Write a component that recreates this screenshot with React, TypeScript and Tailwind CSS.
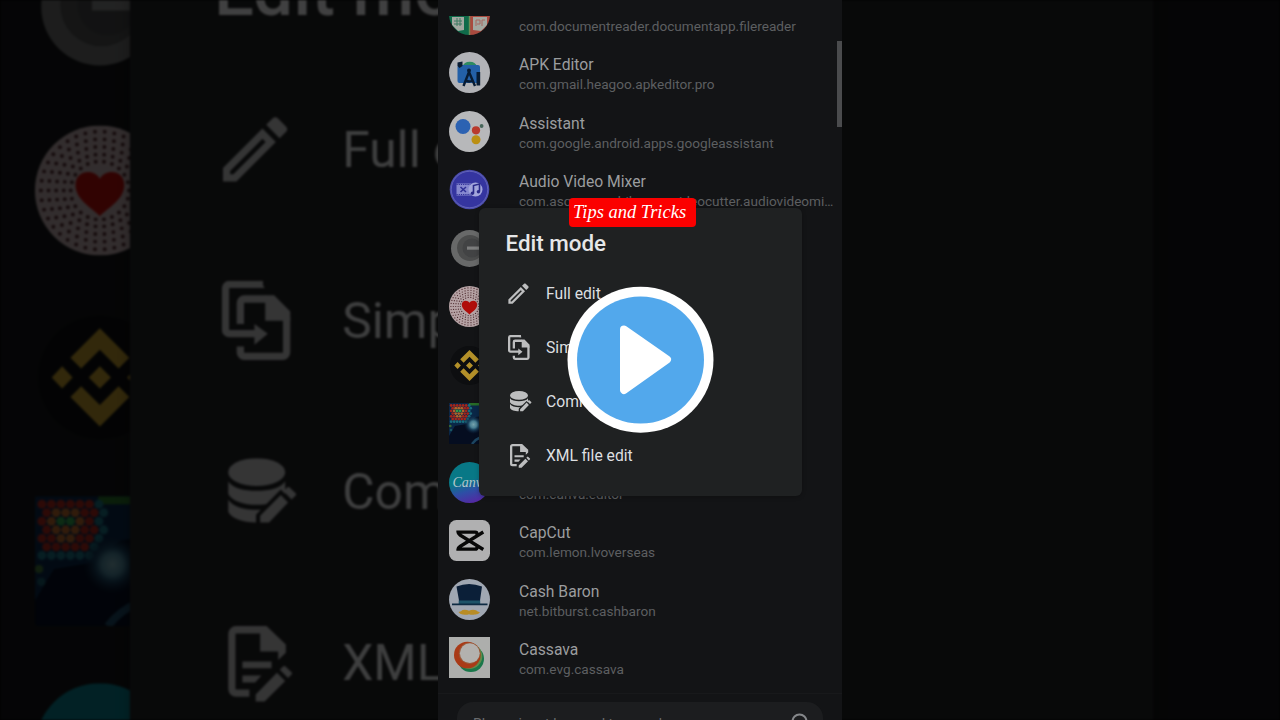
import React from "react";

type App = { name?: string; pkg?: string; icon: React.ReactNode };

const Svg = ({ children }: { children: React.ReactNode }) => (
  <svg className="block h-[41px] w-[41px] shrink-0" viewBox="0 0 41 41">
    {children}
  </svg>
);

const ring = (radius: number, count: number) =>
  Array.from({ length: count }, (_, i) => {
    const a = (i / count) * Math.PI * 2;
    return (
      <circle
        key={`${radius}-${i}`}
        cx={20.5 + Math.cos(a) * radius}
        cy={20.5 + Math.sin(a) * radius}
        r={0.62}
        fill="#4d2a2e"
      />
    );
  });

const bubbles = Array.from({ length: 56 }, (_, i) => {
  const row = Math.floor(i / 8);
  const col = i % 8;
  const x = 2.2 + col * 3 + (row % 2) * 1.5;
  const y = 2.5 + row * 2.7;
  const d = Math.hypot(x - 9.5, y - 8.5);
  if (d > 13) return null;
  const fill = d < 2 ? "#2f9a4a" : d < 5.5 ? "#b0632a" : d < 10 ? "#a3261b" : "#1a6c7c";
  return <circle key={i} cx={x} cy={y} r={1.4} fill={fill} />;
});

const DocsIcon = (
  <Svg>
    <clipPath id="docs">
      <circle cx="20.5" cy="20.5" r="20.5" />
    </clipPath>
    <g clipPath="url(#docs)">
      <path fill="#0f6b4a" d="M0 0h20.5v41H0z" />
      <path fill="#a94a3f" d="M20.5 0H41v41H20.5z" />
      <path fill="#a3a8a1" d="M3 23h12v13l-6 1-6-6zM24 23h14v8l-6 6-8-1z" />
      <path stroke="#3c7a62" strokeWidth="1" d="M5 27h8M5 30h8M8 24v8M11 24v8" />
      <path stroke="#a8665e" fill="none" strokeWidth="1" d="M27 32v-6h4v4h-3M33 32v-6h3" />
      <path stroke="#6d8d57" strokeWidth="1.4" d="M20.5 20v21" />
    </g>
  </Svg>
);

const ApkIcon = (
  <Svg>
    <circle cx="20.5" cy="20.5" r="20.5" fill="#b2b3b7" />
    <path fill="#2d8b62" d="M13.500 14.500a7.500 6.500 0 0 1 14.500 0z" />
    <rect x="8.500" y="13" width="22.500" height="18" rx="2" fill="#2360a8" />
    <path fill="#0a1c33" d="M8.500 10.500l5-1v4.500l-3 2-2-2z" />
    <path fill="none" stroke="#071b33" strokeWidth="2.400" d="M14.500 34l5.500-14 6 14M17 28.500q3 2 7 0" />
    <circle cx="20" cy="18.500" r="2" fill="#071b33" />
    <path fill="#071b33" d="M27.500 20h3.700v13.500h-3.700z" />
  </Svg>
);

const AssistantIcon = (
  <Svg>
    <circle cx="20.5" cy="20.5" r="20.5" fill="#b7b8ba" />
    <circle cx="14" cy="15.5" r="7.500" fill="#2c62b2" />
    <circle cx="27" cy="19.300" r="4.100" fill="#b93a2d" />
    <circle cx="27" cy="28.800" r="4.500" fill="#bb8f12" />
    <circle cx="32.600" cy="15" r="1.900" fill="#47665a" />
  </Svg>
);

const MixerIcon = (
  <Svg>
    <circle cx="20.5" cy="20.5" r="19.800" fill="#4a4bab" />
    <circle cx="20.5" cy="20.5" r="18.200" fill="#3535a0" stroke="#7779c4" strokeWidth=".6" />
    <path fill="#8688cf" d="M7.500 14.500h15v12h-15z" />
    <g stroke="#2f2f96" fill="none">
      <path strokeWidth="1.200" strokeDasharray="1.2 1" d="M7.500 15.500h15M7.500 25.500h15" />
      <path strokeWidth="1.500" d="M11.500 18l5.500 5M11.500 23l5.500-5" />
    </g>
    <circle cx="26.500" cy="20.500" r="7" fill="#a2a5dc" />
    <path fill="none" stroke="#29298a" strokeWidth="1.600" d="M24.500 24v-7.500l6-1.500v7.500" />
    <circle cx="23.400" cy="24.200" r="1.700" fill="#29298a" />
    <circle cx="29.400" cy="22.700" r="1.700" fill="#29298a" />
  </Svg>
);

const GreyIcon = (
  <Svg>
    <circle cx="20.5" cy="20.5" r="18.500" fill="#686969" />
    <circle cx="21" cy="20" r="13" fill="#4b4c4c" />
    <circle cx="23" cy="20" r="9.500" fill="#424344" />
    <path fill="#7c7d7d" d="M18 18.500h15v3.200H18z" />
  </Svg>
);

const HeartIcon = (
  <Svg>
    <circle cx="20.5" cy="20.5" r="20.5" fill="#b5a2a4" />
    {ring(18.6, 38)}
    {ring(16.2, 34)}
    {ring(13.8, 30)}
    {ring(11.4, 26)}
    {ring(9.2, 22)}
    <path
      fill="#b00d0a"
      d="M20.500 28.600c-1.500-2-7.700-5-7.700-9.800 0-4.800 5.900-5.300 7.700-2 1.800-3.300 7.700-2.800 7.700 2 0 4.800-6.200 7.800-7.700 9.800z"
    />
  </Svg>
);

const BinanceIcon = (
  <Svg>
    <circle cx="20.5" cy="20.5" r="19.500" fill="#0d0e10" />
    <g fill="#b39029">
      <path d="M20.500 5l9.300 9.300-3.400 3.400-5.900-5.900-5.900 5.900-3.400-3.400z" />
      <path d="M20.500 36l9.300-9.300-3.400-3.400-5.900 5.900-5.900-5.900-3.400 3.400z" />
      <path d="M20.500 17l3.500 3.500-3.500 3.500-3.500-3.500zM8.600 17l3.300 3.500-3.300 3.500-3.300-3.500zM32.400 17l3.300 3.500-3.300 3.500-3.300-3.500z" />
    </g>
  </Svg>
);

const BubbleIcon = (
  <Svg>
    <defs>
      <radialGradient id="glow">
        <stop offset="0" stopColor="#76a3ad" />
        <stop offset="0.350" stopColor="#4a8094" />
        <stop offset="0.550" stopColor="#1c4560" />
        <stop offset="1" stopColor="#0a1c38" stopOpacity="0" />
      </radialGradient>
    </defs>
    <rect width="41" height="41" rx="1" fill="#050d20" />
    <path fill="#0a2747" d="M0 0h41v12l-14 2-9 7-12 2-6 10z" />
    <path fill="#276b26" d="M20 0h21v2.500H20z" />
    {bubbles}
    <circle cx="1.300" cy="23" r="1.300" fill="#3c6d35" />
    <circle cx="2" cy="27" r="1.300" fill="#185563" />
    <circle cx="24.500" cy="21.500" r="9.500" fill="url(#glow)" />
    <path fill="none" stroke="#1c4560" strokeWidth="2.500" d="M23 41q4-5 9-7" />
  </Svg>
);

const CanvaIcon = (
  <Svg>
    <defs>
      <linearGradient id="canva" x1="0.300" y1="0" x2="0.600" y2="1">
        <stop offset="0.450" stopColor="#087886" />
        <stop offset="0.700" stopColor="#2d4fa6" />
        <stop offset="1" stopColor="#5527a3" />
      </linearGradient>
    </defs>
    <circle cx="20.5" cy="20.5" r="20.5" fill="url(#canva)" />
    <text
      x="3.500"
      y="24.500"
      className="font-['Liberation_Serif',serif] text-[14px] italic"
      fill="#b4c6cc"
    >
      Canva
    </text>
  </Svg>
);

const CapCutIcon = (
  <Svg>
    <rect width="41" height="41" rx="7.500" fill="#b0b0b1" />
    <path
      fill="none"
      stroke="#070707"
      strokeWidth="3.300"
      d="M34.300 12L11 26.500q-2 1.300-2 2.700h17.200q1.800 0 1.800-1.800v-1.200M34.300 29.500L11 15q-2-1.300-2-2.900h17.200q1.800 0 1.800 1.800v1.200"
    />
  </Svg>
);

const BaronIcon = (
  <Svg>
    <circle cx="20.5" cy="20.5" r="20.5" fill="#a0a7b2" />
    <path fill="#0b1f38" d="M7.500 7.500q12.500-5 25.500 0l-2 14v3H10v-3z" />
    <path fill="#1d5368" d="M9.700 21.500h21.500v3.500H9.700z" />
    <path fill="#0d2b43" d="M3 24.500h35.500v1.700H3z" />
    <path fill="#b88c25" d="M9.500 33q3-.5 4-2 3.500-.8 6.500.8 3.500-1.800 7-.5 1.500 1.700 4 2-2 2.500-5 2.200-3.500.8-6-.3-3 1-6 .2-3 .2-4.500-2.400z" />
  </Svg>
);

const CassavaIcon = (
  <Svg>
    <path fill="#adaeac" d="M0 0h41v41H0z" />
    <circle cx="21.800" cy="21.800" r="13.200" fill="#19774a" />
    <circle cx="20.500" cy="19.300" r="12.800" fill="#5f8a4c" />
    <circle cx="18.300" cy="18" r="13.300" fill="#a93a17" />
    <circle cx="20.500" cy="16.300" r="10.700" fill="#9b5a3a" />
    <circle cx="20.800" cy="16.200" r="9.900" fill="#b3b1ae" />
  </Svg>
);

const apps: App[] = [
  { pkg: "com.documentreader.documentapp.filereader", icon: DocsIcon },
  { name: "APK Editor", pkg: "com.gmail.heagoo.apkeditor.pro", icon: ApkIcon },
  { name: "Assistant", pkg: "com.google.android.apps.googleassistant", icon: AssistantIcon },
  { name: "Audio Video Mixer", pkg: "com.asquaremobileapps.videocutter.audiovideomi…", icon: MixerIcon },
  { icon: GreyIcon },
  { icon: HeartIcon },
  { icon: BinanceIcon },
  { icon: BubbleIcon },
  { pkg: "com.canva.editor", icon: CanvaIcon },
  { name: "CapCut", pkg: "com.lemon.lvoverseas", icon: CapCutIcon },
  { name: "Cash Baron", pkg: "net.bitburst.cashbaron", icon: BaronIcon },
  { name: "Cassava", pkg: "com.evg.cassava", icon: CassavaIcon },
];

const modes = [
  {
    label: "Full edit",
    icon: (
      <svg className="-ml-[2.500px] h-[27px] w-[27px] shrink-0" viewBox="0 0 24 24" fill="currentColor">
        <path d="M14.060 9.020l.92.92L5.920 19H5v-.92l9.060-9.060M17.660 3c-.25 0-.51.1-.7.29l-1.830 1.830 3.750 3.750 1.830-1.830c.39-.39.39-1.020 0-1.410l-2.340-2.340c-.2-.2-.45-.29-.71-.29zm-3.600 3.190L3 17.250V21h3.750L17.810 9.940l-3.750-3.750z" />
      </svg>
    ),
  },
  {
    label: "Simple edit",
    icon: (
      <svg className="h-[25px] w-[22px] shrink-0" viewBox="0 0 22 25" fill="currentColor">
        <g fill="none" stroke="currentColor" strokeWidth="2.300">
          <path d="M13 1.150H2.400A1.250 1.250 0 0 0 1.150 2.400V15.400a1.250 1.250 0 0 0 1.250 1.300H11" />
          <path d="M5.850 13.600V7a1.250 1.250 0 0 1 1.250-1.250H14M20.450 11.500V22.600a1.250 1.250 0 0 1-1.250 1.250H7.100a1.250 1.250 0 0 1-1.250-1.250V20.700" />
        </g>
        <path d="M11.600 0h.6l1.300 2.300h-2zM10.300 13.600l4.200 3.100-4.200 3.500zM13.700 4.600h2.800l5.100 5.100v2.900h-7.900z" />
      </svg>
    ),
  },
  {
    label: "Common edit",
    icon: (
      <svg className="ml-[2px] h-[21px] w-[22px] shrink-0" viewBox="0 0 22 21" fill="currentColor">
        <ellipse cx="9" cy="4.400" rx="9" ry="4.400" />
        <path d="M0 7.300c1.500 2.300 5 3 9 3s7.500-.7 9-3v3.900c-1 2.400-5 3.500-9 3.500S1 13.500 0 11.200zM0 13c1.500 2.300 5 3.300 9 3.300h1.500l-1.700 1.700v2.300C4.500 20.200 1 19 0 16.900z" />
        <path
          d="M10.100 18.200l6.500-6.600 2.300 2.400-6 6.300h-2.800z"
          className="fill-none stroke-[#1f2122]"
          strokeWidth="2.400"
        />
        <path d="M10.100 18.200l6.500-6.600 2.300 2.400-6 6.300h-2.800zM17.500 10.400l1.200-1.200q.3-.2.600 0l2 1.900q.3.400 0 .7l-1.300 1.200z" />
      </svg>
    ),
  },
  {
    label: "XML file edit",
    icon: (
      <svg className="ml-[2px] h-[24px] w-[21px] shrink-0" viewBox="0 0 21 24" fill="currentColor">
        <path
          fill="none"
          stroke="currentColor"
          strokeWidth="2.300"
          d="M11 1.150H2.500A1.350 1.350 0 0 0 1.150 2.500V19.800a1.350 1.350 0 0 0 1.350 1.350H6.700"
        />
        <path d="M10.100 0h2l6.100 5.800v2.600l-2.400 2.300V8h-5.700zM4.500 11.200h9.200v2.100H4.500zM4.500 15.600h6l-2 2.200h-4zM8.700 21.600l6.700-6.900 2.600 2.600-6.500 6.500H8.700zM16.300 13.800l1.100-1.100q.3-.2.600 0l2 1.900q.3.400 0 .7l-1.100 1.100z" />
      </svg>
    ),
  },
];

const Screen = () => (
  <div className="relative flex h-[720px] w-[404px] shrink-0 flex-col overflow-hidden bg-[#131416] pt-4 font-[Roboto,sans-serif]">
    <div className="flex h-[678px] shrink-0 flex-col overflow-hidden border-b border-[#18191b]">
      <div className="-mt-[31px] flex flex-col">
        {apps.map((app, i) => (
          <div key={i} className="flex h-[58.500px] shrink-0 items-center gap-[29px] pl-[11px]">
            {app.icon}
            <div className="flex flex-col pt-[3px] whitespace-nowrap">
              <div className="h-[19.500px] pt-[0.700px] text-[15.700px] leading-5 text-[#9b9d9f]">{app.name}</div>
              <div className="h-5 text-[13.600px] leading-5 text-[#5d5f61]">{app.pkg}</div>
            </div>
          </div>
        ))}
      </div>
    </div>
    <div className="mx-[19px] mt-2 flex h-11 shrink-0 items-center justify-between rounded-2xl bg-[#1c1d1f] pr-[11px] pl-4">
      <span className="text-[14px] text-[#6a6b6d]">Please input keyword to search</span>
      <svg className="h-[22px] w-[22px]" viewBox="0 0 22 22" fill="none" stroke="#85878a" strokeWidth="2">
        <circle cx="9.500" cy="8.500" r="7" />
        <path d="M14.500 13.500l6 6" />
      </svg>
    </div>
    <div className="absolute top-[41px] right-0 h-[86px] w-[5px] bg-[#4a4b4d]" />
    <div className="absolute top-[208px] left-[40.500px] flex h-[288px] w-[323px] flex-col rounded-md bg-[#1f2122] pt-[20.500px] shadow-[0_1px_4px_rgba(0,0,0,0.250)]">
      <h1 className="h-[38px] pl-[27px] text-[22.400px] leading-7 font-medium text-[#e6e7e8]">Edit mode</h1>
      {modes.map((mode) => (
        <div key={mode.label} className="flex h-[54px] items-center">
          <div className="flex w-[67.500px] shrink-0 items-center pl-[29px] text-[#bdbebf]">{mode.icon}</div>
          <span className="text-[15.700px] whitespace-nowrap text-[#dddfe0]">{mode.label}</span>
        </div>
      ))}
    </div>
  </div>
);

export default function App() {
  return (
    <div className="relative flex h-[720px] w-[1280px] items-center justify-center overflow-hidden bg-black">
      <div
        aria-hidden="true"
        className="absolute inset-0 flex items-center justify-center overflow-hidden opacity-[0.280] blur-[0.800px]"
      >
        <div className="scale-[3.168]">
          <Screen />
        </div>
      </div>
      <div className="relative">
        <Screen />
        <div className="absolute top-[198px] left-[131px] flex h-[29px] w-[127px] items-center rounded-[4px] bg-[#fb0000] pb-[1px] pl-[4px]">
          <span className="font-['Liberation_Serif',serif] text-[18.500px] leading-none whitespace-nowrap text-white italic">
            Tips and Tricks
          </span>
        </div>
        <svg className="absolute top-[286px] left-[129px] h-[147px] w-[147px]" viewBox="0 0 147 147">
          <circle cx="73.500" cy="73.700" r="73" fill="#fff" />
          <circle cx="73.500" cy="74" r="63.500" fill="#52a8ec" />
          <path
            d="M57 43.500L100 73.500L57 104z"
            fill="#fff"
            stroke="#fff"
            strokeWidth="8"
            strokeLinejoin="round"
          />
        </svg>
      </div>
    </div>
  );
}
